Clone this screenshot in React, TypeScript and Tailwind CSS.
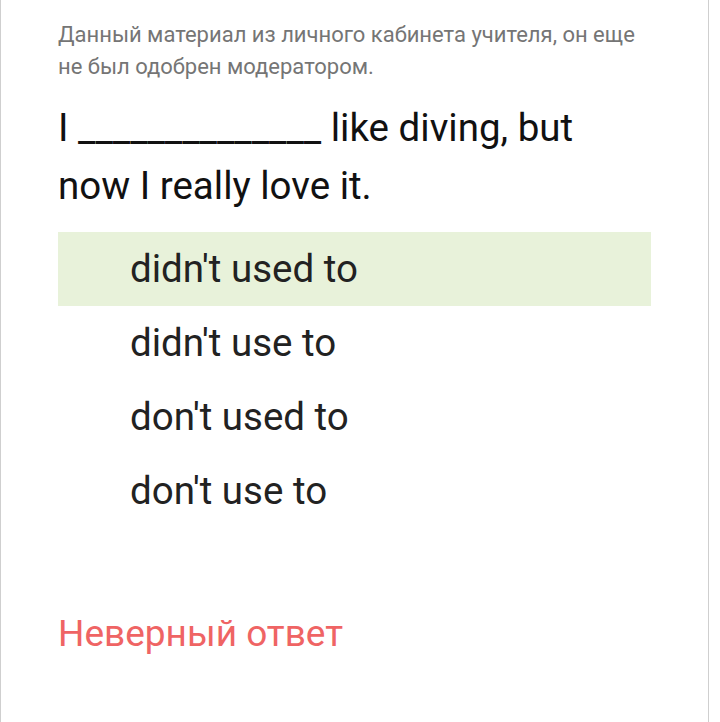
const options = [
  { text: "didn't used to", picked: true },
  { text: "didn't use to", picked: false },
  { text: "don't used to", picked: false },
  { text: "don't use to", picked: false },
]

export default function App() {
  return (
    <div className="min-h-[722px] bg-white font-['Roboto',sans-serif]">
      <div className="min-h-[722px] w-[709px] border-x border-[#cfcfcf] px-[57px] pt-[19px]">
        <p className="text-[22px] leading-[32px] text-[#757575]">
          Данный материал из личного кабинета учителя, он еще не был одобрен модератором.
        </p>
        <p className="mt-4 max-w-[560px] text-[38.5px] leading-[58px] text-[#111]">
          I ______________ like diving, but now I really love it.
        </p>
        <div className="mt-[17px] flex flex-col">
          {options.map((o) => (
            <div
              key={o.text}
              className={`flex h-[74px] items-center pl-[72px] text-[38.5px] text-[#222] ${o.picked ? "bg-[#e8f2da]" : ""}`}
            >
              {o.text}
            </div>
          ))}
        </div>
        <p className="mt-[82px] text-[37px] leading-[48px] text-[#ef6464]">Неверный ответ</p>
      </div>
    </div>
  )
}
